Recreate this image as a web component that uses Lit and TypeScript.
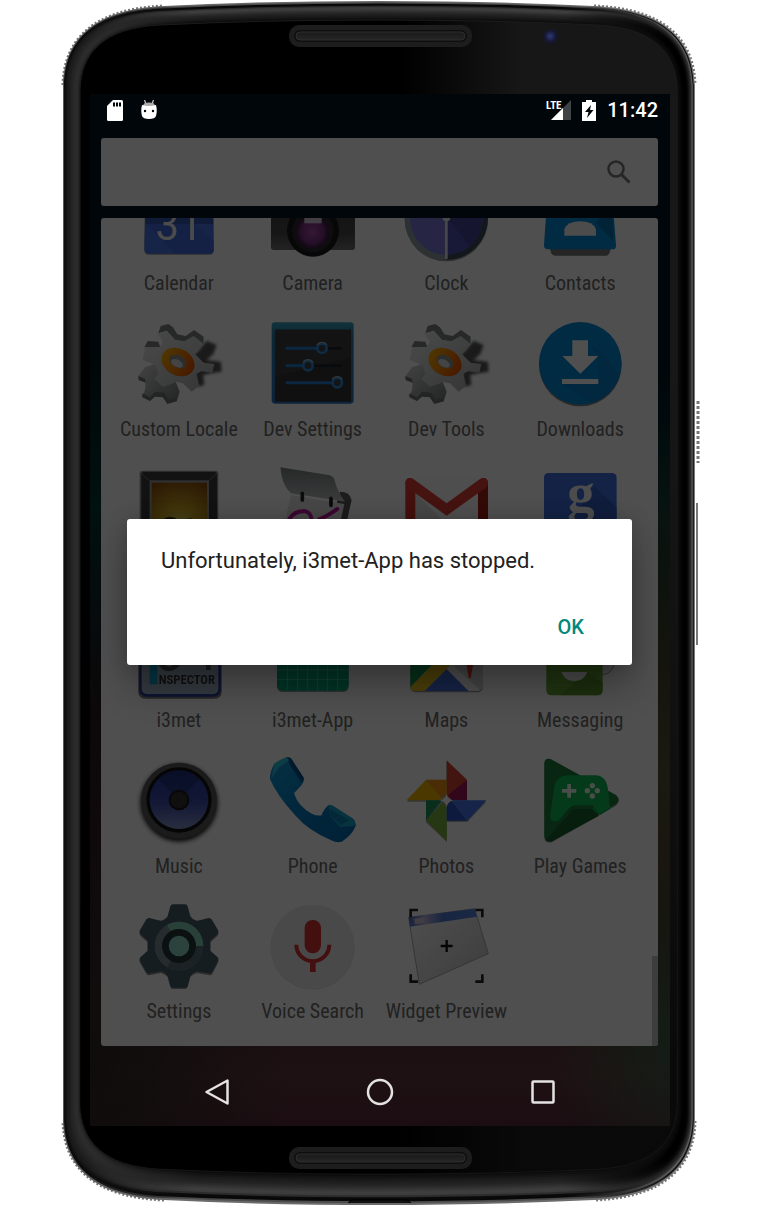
import { LitElement, html, svg, css, SVGTemplateResult } from "lit";
import { customElement, property } from "lit/decorators.js";

type Box = { l: number; t: number; r: number; b: number; cw: number; ch: number; sag: number };

/* Closed outline of the handset: straight sides, soft corners, bowed top and bottom. */
function outline({ l, t, r, b, cw, ch, sag }: Box): string {
  const m = (l + r) / 2;
  return `M${l} ${t + ch} C${l + 1} ${t + ch * 0.48} ${l + cw * 0.28} ${t + sag + 3} ${l + cw} ${t + sag}
    Q${l + cw + 100} ${t} ${m} ${t} Q${r - cw - 100} ${t} ${r - cw} ${t + sag}
    C${r - cw * 0.28} ${t + sag + 3} ${r - 1} ${t + ch * 0.48} ${r} ${t + ch} V${b - ch}
    C${r - 1} ${b - ch * 0.48} ${r - cw * 0.28} ${b - sag - 3} ${r - cw} ${b - sag}
    Q${r - cw - 100} ${b} ${m} ${b} Q${l + cw + 100} ${b} ${l + cw} ${b - sag}
    C${l + cw * 0.28} ${b - sag - 3} ${l + 1} ${b - ch * 0.48} ${l} ${b - ch}Z`;
}

/* The four corner arcs alone, where the metal edge shows its fine ridges. */
function corners({ l, t, r, b, cw, ch, sag }: Box): string {
  return `M${l} ${t + ch} C${l + 1} ${t + ch * 0.48} ${l + cw * 0.28} ${t + sag + 3} ${l + cw} ${t + sag}
    M${r - cw} ${t + sag} C${r - cw * 0.28} ${t + sag + 3} ${r - 1} ${t + ch * 0.48} ${r} ${t + ch}
    M${r} ${b - ch} C${r - 1} ${b - ch * 0.48} ${r - cw * 0.28} ${b - sag - 3} ${r - cw} ${b - sag}
    M${l + cw} ${b - sag} C${l + cw * 0.28} ${b - sag - 3} ${l + 1} ${b - ch * 0.48} ${l} ${b - ch}`;
}

const OUTER: Box = { l: 3, t: 1, r: 635, b: 1205, cw: 101, ch: 84, sag: 5 };
const FACE: Box = { l: 20, t: 20, r: 617, b: 1174, cw: 80, ch: 70, sag: 5 };

/* Rim shades from the outside in: [left, middle, right]. */
const RIM: [string, string, string][] = [
  ["#5a5a5a", "#6a6a6a", "#7a7a7a"],
  ["#0a0a0a", "#4a4a4a", "#111111"],
  ["#0e0e0e", "#080808", "#5c5c5c"],
  ["#161616", "#0a0a0a", "#333333"],
  ["#1a1a1a", "#2c2c2c", "#222222"],
  ["#1c1c1c", "#3c3c3c", "#161616"],
  ["#1e1e1e", "#3e3e3e", "#080808"],
  ["#222222", "#383838", "#020202"],
  ["#242424", "#303030", "#000000"],
  ["#262626", "#292929", "#000000"],
  ["#292929", "#232323", "#000000"],
  ["#2b2b2b", "#1f1f1f", "#030303"],
  ["#2c2c2c", "#1b1b1b", "#060606"],
  ["#2a2a2a", "#161616", "#090909"],
  ["#262626", "#111111", "#0b0b0b"],
  ["#1c1c1c", "#0c0c0c", "#0d0d0d"],
];

function between(k: number): Box {
  const mix = (key: keyof Box) => OUTER[key] + (FACE[key] - OUTER[key]) * k;
  return { l: mix("l"), t: mix("t"), r: mix("r"), b: mix("b"), cw: mix("cw"), ch: mix("ch"), sag: mix("sag") };
}

@customElement("phone-body")
class PhoneBody extends LitElement {
  static styles = css`
    :host { display: block; }
    .body { display: block; width: 100%; height: 100%; }
  `;
  render() {
    const pill = (y: number) => svg`
      <rect x="229" y=${y} width="183" height="22" rx="10" fill="#1d1d1d"/>
      <rect x="234" y=${y + 5} width="173" height="12" rx="6" fill="#0e0e0e"/>
      <rect x="236" y=${y + 7} width="169" height="8" rx="4" fill="url(#slot)" stroke="#2e2e2e"/>`;
    return html`<svg class="body" viewBox="0 0 640 1222" preserveAspectRatio="none" aria-hidden="true">
      <defs>
        ${RIM.map(([a, m, c], i) => svg`<linearGradient id="rim${i}">
          <stop offset="0.03" stop-color=${a}/><stop offset="0.2" stop-color=${m}/>
          <stop offset="0.8" stop-color=${m}/><stop offset="0.97" stop-color=${c}/></linearGradient>`)}
        <linearGradient id="slot" x2="0" y2="1"><stop offset="0" stop-color="#1a1a1a"/><stop offset="1" stop-color="#262626"/></linearGradient>
        <linearGradient id="gloss" x1="0.54" y1="0" x2="0.74" y2="0"><stop offset="0" stop-color="#000"/><stop offset="1" stop-color="#171717"/></linearGradient>
        <linearGradient id="fade" x2="0" y2="1"><stop offset="0.3" stop-color="#000" stop-opacity="0"/><stop offset="0.9" stop-color="#000" stop-opacity="0.6"/></linearGradient>
        <radialGradient id="lens" cx="0.4" cy="0.4"><stop offset="0" stop-color="#303a78"/><stop offset="0.6" stop-color="#151833"/><stop offset="1" stop-color="#161616"/></radialGradient>
      </defs>
      <path d=${corners(OUTER)} fill="none" stroke="#777" stroke-width="3" stroke-dasharray="2 2"/>
      ${RIM.map((_, i) => svg`<path d=${outline(between(i / RIM.length))} fill="url(#rim${i})"/>`)}
      <path d=${outline(FACE)} fill="url(#gloss)" stroke="#1c1c1c"/>
      <path d=${outline(FACE)} fill="url(#fade)"/>
      ${pill(25)} ${pill(1147)}
      <circle cx="492" cy="38" r="9" fill="url(#lens)"/>
      <path d="M288 1203 q2 -3 6 -3 h51 q4 0 6 3" fill="#111" stroke="#000"/>
      <path d="M638 401 V463" stroke="#777" stroke-width="3" stroke-dasharray="3 2"/>
      <path d="M637 503 V645" stroke="#777" stroke-width="2"/>
    </svg>`;
  }
}

/* Icon artwork is drawn on a triple-size grid and shifted into its 90 unit box. */
const art = (x: number, y: number, body: SVGTemplateResult) =>
  svg`<g transform="translate(${x} ${y}) scale(0.3333)">${body}</g>`;

const gear = svg`
  <defs><filter id="soft"><feGaussianBlur stdDeviation="5"/></filter>
  <linearGradient id="steel" x2="1" y2="1"><stop offset="0" stop-color="#f0f0f0"/><stop offset="1" stop-color="#a8aaaa"/></linearGradient>
  <linearGradient id="steel2" x2="1" y2="1"><stop offset="0" stop-color="#d8d8d8"/><stop offset="1" stop-color="#707474"/></linearGradient>
  <linearGradient id="hub"><stop offset="0" stop-color="#ffae00"/><stop offset="1" stop-color="#e85200"/></linearGradient></defs>
  <path d="M312 420 L335 392 L365 405 L355 432 L335 450 L378 455 L380 485 L350 490 L325 495 L328 525 L308 530 L290 440Z" fill="#555" filter="url(#soft)"/>
  <path d="M190 370 L197 348 L220 342 L234 352 L247 373 L272 378 L297 360 L326 380 L325 402 L297 385 L272 395 L240 390 L215 362Z M148 412 L158 393 L190 395 L196 412Z" fill="#7d8583"/>
  <path d="M150 472 L130 498 L131 510 L152 518 L150 540 L142 560 L166 573 L180 553 L205 556 L217 580 L245 574 L254 545 L240 510 L180 462Z" fill="url(#steel2)"/>
  <path d="M130 498 L150 506 L152 518 L131 510Z M142 550 L165 562 L180 545 L208 548 L220 570 L245 562 L245 574 L217 582 L203 562 L180 560 L165 573 L142 562Z" fill="#707775"/>
  <path d="M188 372 L215 362 L240 390 L268 394 L296 378 L322 398 L312 420 L300 432 L326 458 L358 462 L352 488 L318 484 L304 492 L312 528 L290 545 L264 520 L245 516 L204 530 L178 507 L190 490 L180 464 L143 450 L150 414 L192 414 L204 396Z" fill="url(#steel)"/>
  <ellipse cx="249" cy="456" rx="52" ry="40" transform="rotate(28 249 456)" fill="url(#hub)"/>
  <ellipse cx="249" cy="455" rx="27" ry="18" transform="rotate(28 249 455)" fill="#8f9594"/>
  <ellipse cx="246" cy="460" rx="19" ry="11" transform="rotate(28 246 460)" fill="#dcdcdc"/>`;

const ART: Record<string, SVGTemplateResult> = {
  calendar: art(-39, 37, svg`
    <path d="M150 -80 H354 L357 120 Q357 134 343 134 H162 Q148 134 148 120Z" fill="#333" opacity=".5"/>
    <path d="M153 -80 H352 L356 116 Q356 131 342 131 H162 Q148 131 148 116Z" fill="#4674e8"/>
    <path d="M153 -80 H352 L355 42 H151Z" fill="#3557b4"/>
    <path d="M152 42 L240 131 H342 Q356 131 356 116 L355 90 L300 42Z" fill="#3b66d4" opacity=".6"/>
    <text x="252" y="89" text-anchor="middle" font-family="Roboto" font-weight="400" font-size="126" fill="#f2f2f2">31</text>`),
  camera: art(-173, 37, svg`
    <defs><linearGradient id="cam" x2="0" y2="1"><stop offset="0" stop-color="#3a3a3a"/><stop offset=".75" stop-color="#484848"/><stop offset="1" stop-color="#707070"/></linearGradient>
    <radialGradient id="glass"><stop offset="0" stop-color="#a84db0"/><stop offset=".7" stop-color="#78317f"/><stop offset="1" stop-color="#3a1840"/></radialGradient></defs>
    <rect x="528" y="-80" width="252" height="200" rx="8" fill="url(#cam)"/>
    <circle cx="654" cy="62" r="78" fill="#161616"/><circle cx="654" cy="64" r="62" fill="#2c2830"/>
    <circle cx="652" cy="66" r="48" fill="url(#glass)"/><path d="M628 16 H680 V40 H628Z" fill="#d8c8dc"/>`),
  clock: art(-21, 37, svg`
    <circle cx="199" cy="29" r="125" fill="#333" opacity=".5"/>
    <circle cx="199" cy="25" r="125" fill="#8d9ea6"/><path d="M199 -100 A125 125 0 0 1 199 150Z" fill="#384a56"/>
    <circle cx="199" cy="25" r="109" fill="#7a76d8"/><path d="M199 -84 A109 109 0 0 1 199 134Z" fill="#4f4cb0"/>
    <path d="M203 25 L270 110 Q300 80 306 50 L306 0Z" fill="#3a3984" opacity=".5"/>
    <path d="M199 20 V147" stroke="#e8e8e8" stroke-width="8"/><circle cx="199" cy="22" r="12" fill="#f0f0f0"/>`),
  contacts: art(-155, 37, svg`
    <path d="M508 110 H694 L688 130 Q685 137 678 137 H525 Q518 137 514 130Z" fill="#777"/>
    <path d="M505 -80 H694 L708 105 Q709 118 698 118 H504 Q492 118 492 105Z" fill="#0488d8"/>
    <path d="M648 40 L700 92 L694 -20Z" fill="#0671aa"/>
    <path d="M553 77 V58 Q562 34 601 34 Q640 34 648 58 V77Z" fill="#f4f4f4"/>`),
  sliders: art(-173, -109, svg`
    <defs><linearGradient id="edge" x2="0" y2="1"><stop offset="0" stop-color="#34a3c0"/><stop offset=".15" stop-color="#2a7fae"/><stop offset="1" stop-color="#2b6fc0"/></linearGradient></defs>
    <rect x="530" y="337" width="246" height="244" rx="10" fill="url(#edge)"/>
    <rect x="540" y="359" width="228" height="216" fill="#323432"/><path d="M540 359 H768 V440 L540 500Z" fill="#3a3c3a"/>
    ${[[415, 681], [467, 639], [518, 727]].map(([y, x]) => svg`
      <path d="M572 ${y} H741" stroke="#15202e" stroke-width="7"/><path d="M572 ${y} H${x}" stroke="#2880d0" stroke-width="9"/>
      <circle cx=${x} cy=${y} r="14" fill="#3a4048" stroke="#2f8cd8" stroke-width="8"/><path d="M${x - 15} ${y - 10} A18 18 0 0 1 ${x + 15} ${y - 10}" fill="none" stroke="#9fb4c4" stroke-width="4"/>`)}`),
  gear: art(-39, -109, gear),
  download: art(-155, -109, svg`
    <circle cx="601" cy="465" r="124" fill="#333" opacity=".6"/><circle cx="601" cy="460" r="124" fill="#048bd8"/>
    <path d="M624 392 L700 465 L720 500 A124 124 0 0 1 640 578 L546 522 L655 508 L655 438Z" fill="#056ba2" opacity=".3"/>
    <path d="M577 391 H624 V438 H655 L601 491 L547 438 H577Z M546 507 H655 V522 H546Z" fill="#fff"/>`),
  gallery: art(-39, -14, svg`
    <defs><radialGradient id="sun" cx=".5" cy=".8" r=".9"><stop offset="0" stop-color="#f4e27a"/><stop offset=".35" stop-color="#d0b028"/><stop offset="1" stop-color="#8a4a08"/></radialGradient></defs>
    <rect x="134" y="62" width="236" height="240" rx="10" fill="#222" opacity=".5"/><rect x="139" y="66" width="227" height="230" rx="8" fill="#3a3a3a"/>
    <path d="M139 70 L168 96 M366 70 L338 96" stroke="#777" stroke-width="3"/>
    <rect x="164" y="91" width="178" height="180" fill="#9a9a9a"/><rect x="170" y="98" width="166" height="170" fill="url(#sun)"/>
    <path d="M205 207 Q228 192 250 210 L290 205 L300 240 H200Z" fill="#3a3018"/>`),
  gesture: art(-173, -14, svg`
    <defs><linearGradient id="flap" x2="0" y2="1"><stop offset="0" stop-color="#7c8484"/><stop offset="1" stop-color="#bcc2c2"/></linearGradient></defs>
    <path d="M735 125 Q765 125 770 150 L745 260 L700 250Z" fill="#5a5a5a"/>
    <path d="M588 135 L748 162 L720 290 L560 260Z" fill="#e4e4e4"/>
    <path d="M556 52 L700 75 Q718 78 720 95 Q728 125 750 155 L588 130 Q560 105 556 52Z" fill="url(#flap)"/>
    <path d="M622 130 V150 M708 145 V166" stroke="#222" stroke-width="11" stroke-linecap="round"/>
    <path d="M584 206 Q600 180 632 184 Q650 188 650 215 M672 208 Q695 200 727 177" fill="none" stroke="#c0189a" stroke-width="12" stroke-linecap="round"/>`),
  mail: art(-21, -14, svg`
    <rect x="76" y="84" width="248" height="180" rx="14" fill="#fafafa"/><path d="M106 130 L250 270 H106Z" fill="#c8c8c8" opacity=".5"/>
    <path d="M76 100 Q76 84 91 84 L106 100 V260 H76Z" fill="#d8362c"/><path d="M324 100 Q324 84 309 84 L294 100 V260 H324Z" fill="#a82018"/>
    <path d="M76 100 Q77 84 91 84 Q96 84 101 88 L200 160 L299 88 Q304 84 309 84 Q323 84 324 100 Q324 108 317 113 L200 197 L83 113 Q76 108 76 100Z" fill="#e04036"/>`),
  search: art(-155, -14, svg`
    <rect x="492" y="69" width="218" height="218" rx="14" fill="#3f6fe0"/><path d="M642 108 L710 172 V287 H560 L590 190Z" fill="#3257b4" opacity=".7"/>
    <text x="603" y="184" text-anchor="middle" font-family="'Liberation Serif'" font-weight="700" font-size="164" fill="#f4f4f4">g</text>`),
  inspector: art(-39, -160, svg`
    <rect x="130" y="520" width="250" height="226" rx="20" fill="#222" opacity=".6"/>
    <rect x="136" y="520" width="238" height="216" rx="18" fill="#a4b8cc" stroke="#2c3f9c" stroke-width="8"/>
    <path d="M164 560 H187 V703 H164Z" fill="#12a4d8"/><path d="M195 640 Q222 674 250 640 M340 660 V600" fill="none" stroke="#555" stroke-width="14"/>
    <text x="191" y="702" font-family="'Roboto Condensed'" font-weight="700" font-size="38" fill="#383838">NSPECTOR</text>`),
  grid: art(-173, -160, svg`
    <rect x="546" y="508" width="215" height="218" rx="16" fill="#333" opacity=".5"/><rect x="546" y="505" width="215" height="217" rx="16" fill="#05a478"/>
    <path d="M578 505 V722 M608 505 V722 M638 505 V722 M668 505 V722 M698 505 V722 M728 505 V722 M546 660 H761 M546 689 H761" stroke="#4fc8a8" stroke-width="2.5"/>`),
  maps: art(-21, -160, svg`
    <rect x="91" y="508" width="218" height="219" rx="16" fill="#333" opacity=".5"/><rect x="91" y="505" width="218" height="218" rx="16" fill="#d6d6d6"/>
    <path d="M91 600 H200 L91 712Z" fill="#189a50"/><path d="M91 712 L210 590 L236 620 L134 723 H107 Q91 723 91 712Z" fill="#f0c820"/>
    <path d="M134 723 L200 657 L266 723Z" fill="#4472e0"/><path d="M200 657 L215 642 L300 720 Q296 723 290 723 H266Z" fill="#f6f6f6"/>
    <path d="M256 620 H284 L272 684 H266Z" fill="#e03a34"/>`),
  robot: art(-155, -160, svg`
    <path d="M660 630 H705 Q700 672 670 674 H660Z" fill="#e8e8e8" stroke="#999" stroke-width="3"/>
    <path d="M499 560 H668 V720 Q668 736 652 736 H515 Q499 736 499 720Z" fill="#66a434"/><path d="M540 736 L620 665 L668 700 V720 Q668 736 652 736Z" fill="#558c28" opacity=".7"/>
    <path d="M544 666 H622 Q612 693 583 693 Q554 693 544 666Z" fill="#f0f0f0"/>`),
  speaker: art(-39, -11, svg`
    <defs><linearGradient id="cone" x2="0" y2="1"><stop offset="0" stop-color="#263a98"/><stop offset=".5" stop-color="#3448a8"/><stop offset="1" stop-color="#8492cc"/></linearGradient>
    <filter id="halo"><feGaussianBlur stdDeviation="6"/></filter></defs>
    <circle cx="252" cy="174" r="116" fill="#222" filter="url(#halo)"/><circle cx="252" cy="167" r="114" fill="#565656"/>
    <circle cx="252" cy="165" r="98" fill="#111"/><circle cx="252" cy="164" r="88" fill="url(#cone)"/>
    <path d="M252 164 L190 102 A88 88 0 0 1 314 102Z" fill="#141c4c" opacity=".3"/>
    <circle cx="252" cy="165" r="31" fill="#151515"/><circle cx="252" cy="165" r="25" fill="#303030"/>`),
  phone: art(-173, -11, svg`
    <defs><linearGradient id="hand" x2="1" y2="1"><stop offset="0" stop-color="#10a0d8"/><stop offset=".45" stop-color="#057cc0"/><stop offset="1" stop-color="#0468b0"/></linearGradient></defs>
    <path d="M525 102 Q524 80 538 56 Q556 44 575 37 Q588 36 592 46 L626 98 Q628 110 620 120 L597 145 Q610 185 650 206 Q668 214 680 211 Q684 196 700 181 Q706 179 714 183 L774 221 Q784 230 782 243 Q770 272 740 290 Q725 294 712 287 Q640 258 600 210 Q545 150 525 102Z" fill="url(#hand)"/>
    <path d="M575 37 Q588 36 592 46 L626 98 Q627 106 622 114 L586 62Z" fill="#06508a"/>
    <path d="M538 56 Q556 44 575 37 L583 46 L552 66 L530 100Z" fill="#2cc0d8"/>
    <path d="M700 181 Q706 179 714 183 L774 221 Q784 230 778 243 L735 246 L706 214Z" fill="#14a4c4"/><path d="M706 192 L762 226 L738 240 L706 212Z" fill="#0a84b4"/>`),
  photos: art(-21, -11, svg`
    <path d="M199 50 L261 108 V170 H319 L262 231 H201 V292 L138 232 V170 H80 L140 108 H199Z" fill="#333" opacity=".4"/>
    <path d="M200 46 L261 104 L200 165Z" fill="#d84436"/><path d="M261 104 V165 H214 L204 150Z" fill="#a01858"/>
    <path d="M80 166 L138 104 L172 140 L185 166Z" fill="#f0b400"/><path d="M138 104 H200 V150 L185 160Z" fill="#f09010"/>
    <path d="M138 166 H186 L138 227Z" fill="#1c9658"/><path d="M138 227 L190 170 L200 185 V288Z" fill="#7cb03c"/>
    <path d="M200 180 L214 166 L262 227 H200Z" fill="#2c54c4"/><path d="M214 166 H319 L262 227Z" fill="#4474e8"/>
    <path d="M200 145 Q202 163 220 166 Q202 170 200 188 Q198 170 180 166 Q198 163 200 145Z" fill="#fff"/>`),
  games: art(-155, -11, svg`
    <path d="M493 60 Q493 40 512 45 L708 154 Q724 168 708 182 L516 292 Q493 296 493 275Z" fill="#222" opacity=".4"/>
    <path d="M493 56 Q493 38 512 42 L708 150 Q724 166 708 178 L516 289 Q493 293 493 272Z" fill="#1c7a3c"/>
    <path d="M580 192 L636 192 L657 212 L516 289 Q505 293 497 286Z" fill="#155c2c"/>
    <path d="M636 192 L660 210 L708 180 L690 190 L684 140Z" fill="#0aa048"/>
    <path d="M524 120 Q534 92 560 91 H650 Q676 94 683 125 L690 188 L657 207 L638 181 H584 Q575 182 565 192 L538 224 Q528 234 516 227 Q509 222 511 208Z" fill="#0cbc50"/>
    <path d="M562 117 H573 V132 H589 V143 H573 V158 H562 V143 H546 V132 H562Z" fill="#e8f8ec"/>
    <circle cx="637" cy="122" r="8" fill="#e8f8ec"/><circle cx="637" cy="153" r="8" fill="#e8f8ec"/><circle cx="622" cy="137" r="8" fill="#e8f8ec"/><circle cx="652" cy="137" r="8" fill="#e8f8ec"/>`),
  settings: art(-39, -156, svg`
    <path d="M226 489 Q228 483 234 483 H270 Q276 483 278 489 L286 519 Q292 527 306 527 L340 524 Q346 524 350 528 L369 560 Q372 567 368 572 L346 592 V622 L368 642 Q372 648 369 653 L352 686 Q348 692 340 690 L306 684 Q292 688 286 696 L278 726 Q276 732 270 732 H234 Q228 732 226 726 L218 696 Q212 688 198 684 L166 690 Q158 692 154 686 L135 653 Q132 648 136 642 L158 622 V592 L136 572 Q132 567 135 560 L154 528 Q158 524 164 524 L198 527 Q212 527 218 519Z" fill="#1c1c1c" opacity=".5"/>
    <path d="M226 484 Q228 478 234 478 H270 Q276 478 278 484 L286 514 Q292 524 306 528 L340 519 Q346 519 350 523 L369 555 Q372 562 368 567 L346 587 V617 L368 637 Q372 643 369 648 L352 681 Q348 687 340 685 L306 679 Q292 683 286 693 L278 722 Q276 728 270 728 H234 Q228 728 226 722 L218 693 Q212 683 198 679 L166 685 Q158 687 154 681 L135 648 Q132 643 136 637 L158 617 V587 L136 567 Q132 562 135 555 L154 523 Q158 519 164 519 L198 528 Q212 524 218 514Z" fill="#465e6c"/>
    <circle cx="252" cy="603" r="61" fill="none" stroke="#7c8c96" stroke-width="24"/>
    <path d="M222 656 A61 61 0 0 0 313 603" fill="none" stroke="#5a6c78" stroke-width="24"/>
    <path d="M222 550 A61 61 0 0 1 313 603" fill="none" stroke="#84d0b8" stroke-width="24"/>
    <circle cx="252" cy="603" r="51" fill="#253238"/><circle cx="252" cy="603" r="31" fill="#8ad8c0"/>`),
  voice: art(-173, -156, svg`
    <circle cx="653" cy="608" r="126" fill="#ccc" opacity=".5"/><circle cx="653" cy="605" r="126" fill="#eaeaea"/>
    <rect x="629" y="525" width="49" height="100" rx="24" fill="#d83030"/>
    <path d="M604 599 A49 49 0 0 0 703 599" fill="none" stroke="#d83030" stroke-width="12"/><path d="M645 650 H662 V681 H645Z" fill="#d83030"/>`),
  widget: art(-21, -156, svg`
    <defs><linearGradient id="bar"><stop offset="0" stop-color="#4a6cc0"/><stop offset=".25" stop-color="#b8b0e0"/><stop offset=".5" stop-color="#4c78d0"/><stop offset="1" stop-color="#5a84e0"/></linearGradient>
    <linearGradient id="sheet" x2="1" y2="1"><stop offset="0" stop-color="#fff"/><stop offset="1" stop-color="#c4c4c4"/></linearGradient></defs>
    <path d="M86 518 L284 491 L325 626 L118 718Z" fill="url(#sheet)" stroke="#aaa" stroke-width="3"/>
    <path d="M86 516 L284 491 L291 515 L90 545Z" fill="url(#bar)"/><path d="M103 522 L134 517 V534 L105 538Z" fill="#d0c8d8"/>
    <path d="M92 517 V495 H114 M286 495 H307 V517 M92 688 V710 H114 M286 710 H307 V688" fill="none" stroke="#222" stroke-width="8"/>
    <path d="M200 585 V621 M182 603 H218" stroke="#111" stroke-width="7"/>`),
};

@customElement("app-tile")
class AppTile extends LitElement {
  @property() art = "";
  @property() label = "";
  @property({ type: Boolean }) covered = false;
  static styles = css`
    :host { display: block; min-width: 0; }
    .tile { width: 100%; height: 100%; box-sizing: border-box; display: flex; flex-direction: column; align-items: center; gap: 8px;
      padding: 1px 0 0; border: 0; background: none; color: #212121;
      font: 400 20px/24px "Roboto Condensed", Roboto, sans-serif; white-space: nowrap; }
    .icon { width: 90px; height: 90px; flex: none; filter: brightness(0.31); }
  `;
  render() {
    return html`<button class="tile" type="button" aria-label=${this.label}>
      <svg class="icon" viewBox="0 0 90 90" aria-hidden="true">${ART[this.art]}</svg>
      ${this.covered ? "" : html`<span>${this.label}</span>`}
    </button>`;
  }
}

const APPS: [string, string, boolean?][] = [
  ["calendar", "Calendar"], ["camera", "Camera"], ["clock", "Clock"], ["contacts", "Contacts"],
  ["gear", "Custom Locale"], ["sliders", "Dev Settings"], ["gear", "Dev Tools"], ["download", "Downloads"],
  ["gallery", "Gallery", true], ["gesture", "Gestures", true], ["mail", "Gmail", true], ["search", "Google", true],
  ["inspector", "i3met"], ["grid", "i3met-App"], ["maps", "Maps"], ["robot", "Messaging"],
  ["speaker", "Music"], ["phone", "Phone"], ["photos", "Photos"], ["games", "Play Games"],
  ["settings", "Settings"], ["voice", "Voice Search"], ["widget", "Widget Preview"],
];

@customElement("app-root")
class AppRoot extends LitElement {
  static styles = css`
    :host { display: block; background: #fff; font-family: Roboto, sans-serif; }
    .phone { display: grid; grid-template-columns: minmax(0, 1fr); max-width: 640px; margin: 0 auto; }
    .phone > * { grid-area: 1 / 1; }
    .screen { margin: 94px 30px 96px; z-index: 1; display: flex; flex-direction: column;
      background:
        radial-gradient(ellipse at 100% 92%, rgba(18, 30, 22, 0.8), transparent 14%),
        radial-gradient(ellipse 200px 360px at 100% 66%, rgba(28, 28, 16, 0.9), transparent),
        radial-gradient(ellipse 200px 260px at 0 94%, rgba(12, 12, 10, 0.9), transparent),
        linear-gradient(180deg, #000609 0, #000609 25%, #011010 40%, #0c080a 60%, #12090d 80%, #1e1113 95%, #1b0d12 100%); }
    .status { display: flex; align-items: center; height: 32px; padding: 0 12px 0 17px; color: #fff; font-weight: 500; font-size: 20px; line-height: 32px; }
    .status svg { display: block; flex: none; }
    .left, .right { display: flex; align-items: center; }
    .left { gap: 18px; flex: 1; }
    .right { gap: 10px; }
    .content { display: grid; grid-template-columns: minmax(0, 1fr); padding: 12px 12px 0 11px; }
    .home, .dialog { grid-area: 1 / 1; }
    .home { display: flex; flex-direction: column; gap: 12px; }
    .search { display: flex; align-items: center; height: 68px; border-radius: 3px; background: #4f4f4f; }
    .query { flex: 1; min-width: 0; height: 100%; border: 0; padding: 0 24px; background: none; color: #212121; font: 400 22px/28px Roboto, sans-serif; outline: none; }
    .find { flex: none; width: 48px; height: 48px; margin-right: 15px; padding: 0; border: 0; background: none; display: grid; place-items: center; }
    .drawer { position: relative; overflow: hidden; border-radius: 3px; background: #4f4f4f; }
    .apps { display: grid; grid-template-columns: repeat(4, minmax(0, 1fr)); grid-template-rows: repeat(6, minmax(0, 1fr)); height: 874px; margin-top: -46px; padding: 0 11px; }
    .thumb { position: absolute; right: 0; bottom: 0; width: 6px; height: 90px; background: #3d3d3d; }
    .dialog { align-self: center; z-index: 1; margin: 0 26px; padding: 28px 34px 14px; display: flex; flex-direction: column; gap: 28px; border-radius: 3px; background: #fff; box-shadow: 0 20px 36px rgba(0, 0, 0, 0.3), 0 0 20px rgba(0, 0, 0, 0.15); }
    .message { margin: 0; color: #212121; font-size: 22px; line-height: 28px; font-weight: 400; }
    .actions { display: flex; justify-content: flex-end; }
    .ok { height: 48px; padding: 0 14px; border: 0; background: none; color: #00897b; font: 500 20px/24px Roboto, sans-serif; }
    .nav { display: flex; justify-content: center; height: 80px; box-sizing: border-box; padding-top: 11px; }
    .key { flex: 0 1 163px; padding: 0; border: 0; background: none; display: grid; place-items: center; }
  `;

  render() {
    return html`<main class="phone">
      <phone-body></phone-body>
      <div class="screen">
        <header class="status">
          <div class="left">
            <svg width="16" height="21" viewBox="0 0 16 21" aria-hidden="true"><path d="M6 0 H14.500 Q16 0 16 1.500 V19.500 Q16 21 14.500 21 H1.500 Q0 21 0 19.500 V6Z" fill="#fff"/><path d="M6 2.500h2v4h-2z M9 2.500h2v4h-2z M12 2.500h2v4h-2z" fill="#000609"/></svg>
            <svg width="16" height="21" viewBox="0 0 16 21" aria-hidden="true"><path d="M3.500 0 L5 4 M12.500 0 L11 4" stroke="#ccc" stroke-width="1.200"/><path d="M3 3.500 Q8 1.500 13 3.500 L14 6 H2Z" fill="#aaa"/><path d="M1 5 Q8 7 15 5 Q16.500 11 15 16 Q14 19 8 19 Q2 19 1 16 Q-0.500 11 1 5Z" fill="#fff"/><circle cx="4" cy="11" r="1.200" fill="#000609"/><circle cx="12" cy="11" r="1.200" fill="#000609"/></svg>
          </div>
          <div class="right">
            <svg width="26" height="21" viewBox="0 0 26 21" aria-hidden="true"><path d="M25 0 V20 H5Z" fill="#3f4346"/><path d="M17 8 V20 H5Z" fill="#fff"/><path d="M0 0 H14 V9 H0Z" fill="#000609"/><text x="0" y="9" font-family="Roboto Condensed, sans-serif" font-weight="700" font-size="11" fill="#fff">LTE</text></svg>
            <svg width="15" height="21" viewBox="0 0 15 21" aria-hidden="true"><path d="M4 0 H10 V2 H14 V21 H0 V2 H4Z" fill="#fff"/><path d="M9 5 L3 12 H6.500 L5 18 L11.500 10 H8Z" fill="#000609"/></svg>
            <time>11:42</time>
          </div>
        </header>
        <div class="content">
          <div class="home">
            <form class="search" role="search">
              <input class="query" type="text" aria-label="Search" />
              <button class="find" type="button" aria-label="Search">
                <svg width="24" height="24" viewBox="0 0 24 24" aria-hidden="true"><circle cx="9" cy="9" r="7.500" fill="none" stroke="#262626" stroke-width="2.500"/><path d="M14.500 14.500 L22.500 22.500" stroke="#262626" stroke-width="3"/></svg>
              </button>
            </form>
            <section class="drawer">
              <div class="apps">
                ${APPS.map(([art, label, covered]) => html`<app-tile art=${art} label=${label} ?covered=${covered ?? false}></app-tile>`)}
              </div>
              <div class="thumb"></div>
            </section>
          </div>
          <div class="dialog" role="alertdialog" aria-labelledby="message">
            <p class="message" id="message">Unfortunately, i3met-App has stopped.</p>
            <div class="actions"><button class="ok" type="button">OK</button></div>
          </div>
        </div>
        <nav class="nav">
          <button class="key" type="button" aria-label="Back"><svg width="28" height="28" viewBox="0 0 28 28" aria-hidden="true"><path d="M24.500 2.500 V25.500 L3.500 14Z" fill="none" stroke="#e4e2e2" stroke-width="2.500" stroke-linejoin="round"/></svg></button>
          <button class="key" type="button" aria-label="Home"><svg width="28" height="28" viewBox="0 0 28 28" aria-hidden="true"><circle cx="14" cy="14" r="12" fill="none" stroke="#e4e2e2" stroke-width="2.500"/></svg></button>
          <button class="key" type="button" aria-label="Recent apps"><svg width="28" height="28" viewBox="0 0 28 28" aria-hidden="true"><rect x="3.500" y="3.500" width="21" height="21" rx="1" fill="none" stroke="#e4e2e2" stroke-width="2.500"/></svg></button>
        </nav>
      </div>
    </main>`;
  }
}
